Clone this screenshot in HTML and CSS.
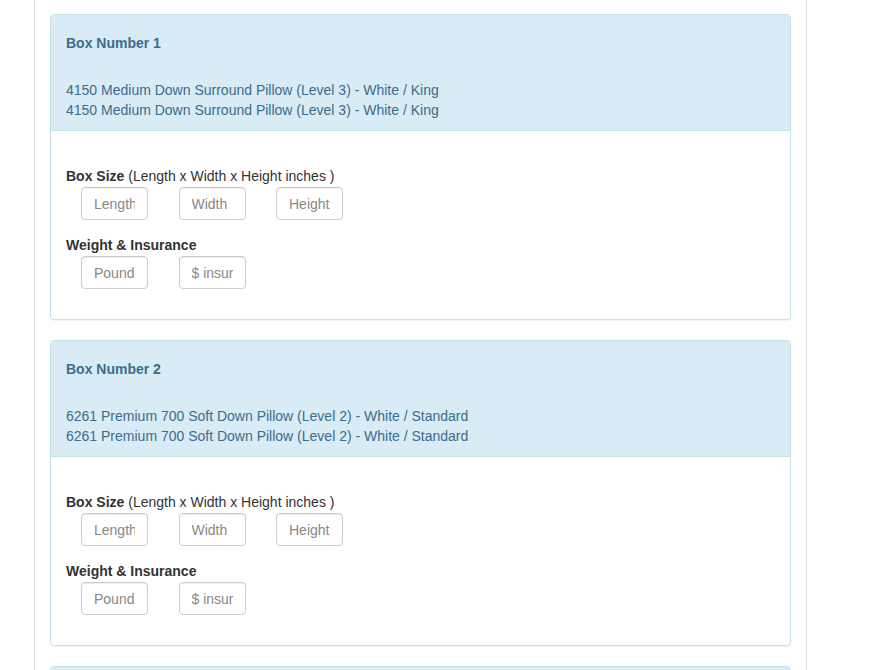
FILE: index.html
```html
<!DOCTYPE html>
<html lang="en">
<head>
    <meta charset="UTF-8">
    <title>Box Details</title>
    <link rel="stylesheet" href="styles.css">
</head>
<body>
    <div class="container">
        <div class="panel">
            <div class="panel-heading">
                <div class="panel-title">Box Number 1</div>
                <div class="item">4150 Medium Down Surround Pillow (Level 3) - White / King</div>
                <div class="item">4150 Medium Down Surround Pillow (Level 3) - White / King</div>
            </div>
            <div class="panel-body">
                <div class="form-group">
                    <label><b>Box Size</b> (Length x Width x Height inches )</label>
                    <div class="inputs">
                        <input type="text" placeholder="Length">
                        <input type="text" placeholder="Width">
                        <input type="text" placeholder="Height">
                    </div>
                </div>
                <div class="form-group">
                    <label><b>Weight &amp; Insurance</b></label>
                    <div class="inputs">
                        <input type="text" placeholder="Pound">
                        <input type="text" placeholder="$ insurance">
                    </div>
                </div>
            </div>
        </div>

        <div class="panel">
            <div class="panel-heading">
                <div class="panel-title">Box Number 2</div>
                <div class="item">6261 Premium 700 Soft Down Pillow (Level 2) - White / Standard</div>
                <div class="item">6261 Premium 700 Soft Down Pillow (Level 2) - White / Standard</div>
            </div>
            <div class="panel-body">
                <div class="form-group">
                    <label><b>Box Size</b> (Length x Width x Height inches )</label>
                    <div class="inputs">
                        <input type="text" placeholder="Length">
                        <input type="text" placeholder="Width">
                        <input type="text" placeholder="Height">
                    </div>
                </div>
                <div class="form-group">
                    <label><b>Weight &amp; Insurance</b></label>
                    <div class="inputs">
                        <input type="text" placeholder="Pound">
                        <input type="text" placeholder="$ insurance">
                    </div>
                </div>
            </div>
        </div>

        <!-- next box, only its top edge is in view -->
        <div class="panel">
            <div class="panel-heading panel-heading-empty"></div>
        </div>
    </div>
</body>
</html>
```

FILE: styles.css
```css
body {
    margin: 0;
    font-family: 'Liberation Sans', Arial, sans-serif;
    font-size: 14px;
    line-height: 20px;
    color: #333;
    background-color: #fff;
    overflow: hidden;
}

.container {
    box-sizing: border-box;
    width: 773px;
    margin-left: 34px;
    min-height: 100vh;
    padding: 14px 15px 0;
    border-left: 1px solid #ddd;
    border-right: 1px solid #ddd;
}

.panel {
    margin-bottom: 20px;
    background-color: #fff;
    border: 1px solid #c6e0ea;
    border-radius: 4px;
    box-shadow: 0 1px 1px rgba(0, 0, 0, 0.05);
}

.panel-heading {
    padding: 10px 15px;
    color: #3a6d8e;
    background-color: #d9ebf5;
    border-bottom: 1px solid #c6e0ea;
    border-radius: 3px 3px 0 0;
}

.panel-heading-empty {
    height: 96px;
}

.panel-title {
    margin: 8px 0 27px;
    font-weight: bold;
}

.panel-body {
    padding: 35px 15px 15px;
}

.form-group {
    margin-bottom: 15px;
}

label {
    display: block;
    margin-bottom: 1px;
}

.inputs {
    display: flex;
    gap: 30.5px;
    padding-left: 15px;
}

input {
    box-sizing: border-box;
    width: 67px;
    height: 33px;
    padding: 6px 12px;
    font-family: 'Liberation Sans', Arial, sans-serif;
    font-size: 14px;
    color: #555;
    background-color: #fff;
    border: 1px solid #ccc;
    border-radius: 4px;
    box-shadow: inset 0 1px 1px rgba(0, 0, 0, 0.075);
}

input::placeholder {
    color: #888;
}
```
